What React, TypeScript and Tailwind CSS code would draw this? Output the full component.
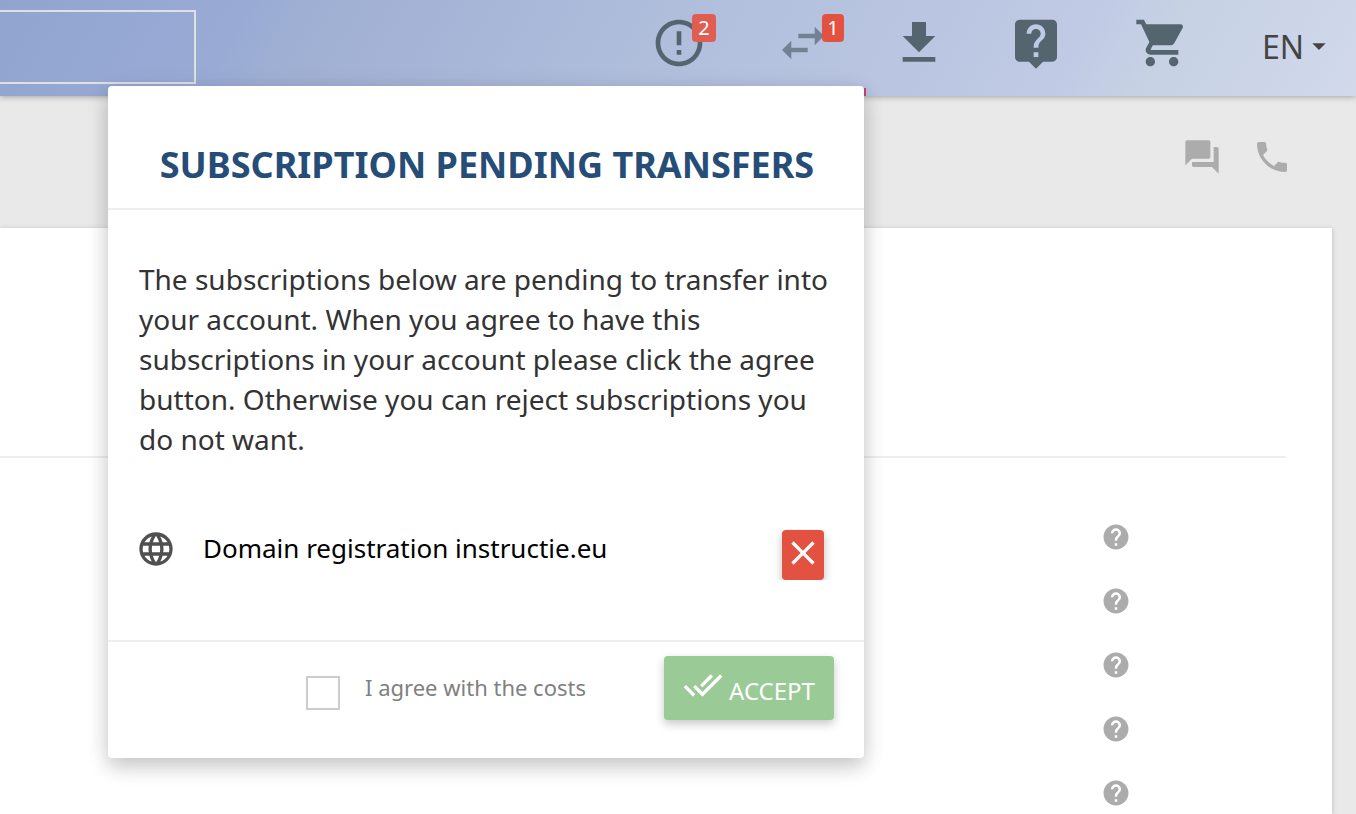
import { useState } from "react";

const paths = {
  errorOutline:
    "M11 15h2v2h-2zm0-8h2v6h-2zm.99-5C6.47 2 2 6.48 2 12s4.47 10 9.99 10C17.52 22 22 17.52 22 12S17.52 2 11.99 2zM12 20c-4.42 0-8-3.58-8-8s3.58-8 8-8 8 3.58 8 8-3.58 8-8 8z",
  swap: "M6.99 11L3 15l3.99 4v-3H14v-2H6.99v-3zM21 9l-3.99-4v3H10v2h7.01v3L21 9z",
  download: "M19 9h-4V3H9v6H5l7 7 7-7zM5 18v2h14v-2H5z",
  liveHelp:
    "M19 2H5c-1.11 0-2 .9-2 2v14c0 1.1.89 2 2 2h4l3 3 3-3h4c1.1 0 2-.9 2-2V4c0-1.1-.9-2-2-2zm-6 16h-2v-2h2v2zm2.07-7.75l-.9.92C13.45 11.9 13 12.5 13 14h-2v-.5c0-1.1.45-2.1 1.17-2.83l1.24-1.26c.37-.36.59-.86.59-1.41 0-1.1-.9-2-2-2s-2 .9-2 2H8c0-2.21 1.79-4 4-4s4 1.79 4 4c0 .88-.36 1.68-.93 2.25z",
  cart: "M7 18c-1.1 0-1.99.9-1.99 2S5.9 22 7 22s2-.9 2-2-.9-2-2-2zM1 2v2h2l3.6 7.59-1.35 2.45c-.16.28-.25.61-.25.96 0 1.1.9 2 2 2h12v-2H7.42c-.14 0-.25-.11-.25-.25l.03-.12.9-1.63h7.45c.75 0 1.41-.41 1.75-1.03l3.58-6.49c.08-.14.12-.31.12-.48 0-.55-.45-1-1-1H5.21l-.94-2H1zm16 16c-1.1 0-1.99.9-1.99 2s.89 2 1.99 2 2-.9 2-2-.9-2-2-2z",
  dropDown: "M7 10l5 5 5-5z",
  forum:
    "M21 6h-2v9H6v2c0 .55.45 1 1 1h11l4 4V7c0-.55-.45-1-1-1zm-4 6V3c0-.55-.45-1-1-1H3c-.55 0-1 .45-1 1v14l4-4h10c.55 0 1-.45 1-1z",
  phone:
    "M6.62 10.79c1.44 2.83 3.76 5.14 6.59 6.59l2.2-2.2c.27-.27.67-.36 1.02-.24 1.12.37 2.33.57 3.57.57.55 0 1 .45 1 1V20c0 .55-.45 1-1 1-9.39 0-17-7.61-17-17 0-.55.45-1 1-1h3.5c.55 0 1 .45 1 1 0 1.25.2 2.45.57 3.57.11.35.03.74-.25 1.02l-2.2 2.2z",
  help: "M12 2C6.48 2 2 6.48 2 12s4.48 10 10 10 10-4.48 10-10S17.52 2 12 2zm1 17h-2v-2h2v2zm2.07-7.75l-.9.92C13.45 12.9 13 13.5 13 15h-2v-.5c0-1.1.45-2.1 1.17-2.83l1.24-1.26c.37-.36.59-.86.59-1.41 0-1.1-.9-2-2-2s-2 .9-2 2H8c0-2.21 1.79-4 4-4s4 1.79 4 4c0 .88-.36 1.68-.93 2.25z",
  globe:
    "M11.99 2C6.47 2 2 6.48 2 12s4.47 10 9.99 10C17.52 22 22 17.52 22 12S17.52 2 11.99 2zm6.93 6h-2.95c-.32-1.25-.78-2.45-1.38-3.56 1.84.63 3.37 1.91 4.33 3.56zM12 4.04c.83 1.2 1.48 2.53 1.91 3.96h-3.82c.43-1.43 1.08-2.76 1.91-3.96zM4.26 14C4.1 13.36 4 12.69 4 12s.1-1.36.26-2h3.38c-.08.66-.14 1.32-.14 2 0 .68.06 1.34.14 2H4.26zm.82 2h2.95c.32 1.25.78 2.45 1.38 3.56-1.84-.63-3.37-1.9-4.33-3.56zm2.95-8H5.08c.96-1.66 2.49-2.93 4.33-3.56C8.81 5.55 8.35 6.75 8.03 8zM12 19.96c-.83-1.2-1.48-2.53-1.91-3.96h3.82c-.43 1.43-1.08 2.76-1.91 3.96zM14.34 14H9.66c-.09-.66-.16-1.32-.16-2 0-.68.07-1.35.16-2h4.68c.09.65.16 1.32.16 2 0 .68-.07 1.34-.16 2zm.25 5.56c.6-1.11 1.06-2.31 1.38-3.56h2.95c-.96 1.65-2.49 2.93-4.33 3.56zM16.36 14c.08-.66.14-1.32.14-2 0-.68-.06-1.34-.14-2h3.38c.16.64.26 1.31.26 2s-.1 1.36-.26 2h-3.38z",
  close:
    "M19 6.41L17.59 5 12 10.59 6.41 5 5 6.41 10.59 12 5 17.59 6.41 19 12 13.41 17.59 19 19 17.59 13.41 12z",
  doneAll:
    "M18 7l-1.41-1.41-6.34 6.34 1.41 1.41L18 7zm4.24-1.41L11.66 16.17 7.48 12l-1.41 1.41L11.66 19l12-12-1.42-1.41zM.41 13.41L6 19l1.41-1.41L1.83 12 .41 13.41z",
};

function Icon({ name, className }: { name: keyof typeof paths; className: string }) {
  return (
    <svg viewBox="0 0 24 24" fill="currentColor" aria-hidden="true" className={className}>
      <path d={paths[name]} />
    </svg>
  );
}

function Header() {
  return (
    <header className="relative z-10 flex h-24 items-start justify-between bg-[linear-gradient(120deg,#91a4d0_0%,#99abd5_18%,#9fafd3_22%,#b2c0dd_52%,#bdc8e3_73%,#c2cbe5_79%,#c6d1e4_84%,#d1d9eb_100%)] text-[#54656f] shadow-[0_1px_6px_rgba(0,0,0,0.3)]">
      <input
        type="search"
        aria-label="Search"
        className="mt-2.5 h-[74px] w-[196px] border-2 border-l-0 border-[#e0e0e0] bg-transparent px-4 text-2xl outline-none"
      />
      <nav className="flex h-24 items-start pr-[21px] pt-[15px]">
        <button type="button" aria-label="Notifications" className="relative mr-[68px]">
          <Icon name="errorOutline" className="size-14" />
          <span className="absolute -top-px left-[41px] flex h-7 w-6 items-center justify-center rounded bg-[#e05d52] text-xl text-white">
            2
          </span>
        </button>
        <button type="button" aria-label="Pending transfers" className="relative mr-[60px]">
          <Icon name="swap" className="size-14 text-[#738292]" />
          <span className="absolute -top-px left-[47px] flex h-7 w-[22px] items-center justify-center rounded bg-[#e35241] text-xl text-white">
            1
          </span>
          <span className="absolute -left-9 top-[73px] h-2 w-[127px] bg-[#cc417c]" />
        </button>
        <button type="button" aria-label="Downloads" className="mr-[61px]">
          <Icon name="download" className="size-14" />
        </button>
        <button type="button" aria-label="Help" className="mr-[70px]">
          <Icon name="liveHelp" className="size-14" />
        </button>
        <button type="button" aria-label="Shopping cart" className="mr-[72px]">
          <Icon name="cart" className="size-14" />
        </button>
        <button type="button" className="flex h-16 items-center text-[32px] text-[#444]">
          EN
          <Icon name="dropDown" className="-ml-px mb-0.5 size-8" />
        </button>
      </nav>
    </header>
  );
}

function TransferDialog() {
  const [agreed, setAgreed] = useState(false);
  return (
    <section
      role="dialog"
      aria-labelledby="dialog-title"
      className="absolute left-[108px] top-[86px] z-20 w-[756px] rounded-sm bg-white shadow-[0_10px_20px_rgba(0,0,0,0.14),0_4px_22px_rgba(0,0,0,0.12)]"
    >
      <h2
        id="dialog-title"
        className="border-b-2 border-[#eee] pb-[19px] pl-0.5 pt-[55px] text-center text-4xl leading-12 font-bold text-[#264d77]"
      >
        SUBSCRIPTION PENDING TRANSFERS
      </h2>
      <div className="px-[31px] pb-[60px] pt-[49px]">
        <p className="text-[28px] leading-10 text-[#333]">
          The subscriptions below are pending to transfer into your account. When you agree to have this
          subscriptions in your account please click the agree button. Otherwise you can reject subscriptions
          you do not want.
        </p>
        <div className="mt-[70px] flex items-start overflow-hidden pr-[9px]">
          <Icon name="globe" className="-ml-[3px] size-10 text-[#505050]" />
          <span className="ml-[27px] flex-1 text-[26px] leading-[38px] text-black">
            Domain registration instructie.eu
          </span>
          <button
            type="button"
            aria-label="Reject"
            className="mt-px flex h-[50px] w-[42px] justify-center rounded bg-[#e35241] pt-[3px] text-white shadow-[0_4px_10px_rgba(0,0,0,0.25)]"
          >
            <Icon name="close" className="size-10" />
          </button>
        </div>
      </div>
      <footer className="flex items-start justify-end border-t-2 border-[#eee] pb-[38px] pl-[30px] pr-[30px] pt-3.5">
        <label className="mr-[78px] flex items-start gap-[25px] pt-[15px] text-[22px] leading-8 text-[#808080]">
          <input
            type="checkbox"
            checked={agreed}
            onChange={(e) => setAgreed(e.target.checked)}
            className="mt-[5px] size-[34px] appearance-none border-2 border-[#ccc] bg-white checked:bg-[#9aca96]"
          />
          I agree with the costs
        </label>
        <button
          type="button"
          className="flex h-16 w-[170px] items-start justify-center gap-1.5 rounded bg-[#9aca96] pt-[9px] text-2xl text-white shadow-[0_4px_10px_rgba(0,0,0,0.22)]"
        >
          <Icon name="doneAll" className="size-10" />
          <span className="pt-2.5">ACCEPT</span>
        </button>
      </footer>
    </section>
  );
}

export default function App() {
  return (
    <div className="relative flex h-screen flex-col overflow-hidden bg-[#e9e9e9] font-['Noto_Sans',sans-serif]">
      <Header />
      <div className="flex h-[132px] shrink-0 items-start justify-end gap-[30px] pr-16 pt-[41px] text-[#acacac]">
        <button type="button" aria-label="Chat">
          <Icon name="forum" className="size-10" />
        </button>
        <button type="button" aria-label="Call">
          <Icon name="phone" className="size-10" />
        </button>
      </div>
      <main className="mr-6 flex-1 bg-white shadow-[0_1px_5px_rgba(0,0,0,0.2)]">
        <div className="mr-[46px] h-[230px] border-b-2 border-[#eee]" />
        <ul className="flex flex-col items-end gap-[34px] pr-[201px] pt-16 text-[#acacac]">
          {[1, 2, 3, 4, 5].map((row) => (
            <li key={row}>
              <button type="button" aria-label="More information" className="block">
                <Icon name="help" className="size-[30px]" />
              </button>
            </li>
          ))}
        </ul>
      </main>
      <TransferDialog />
    </div>
  );
}
